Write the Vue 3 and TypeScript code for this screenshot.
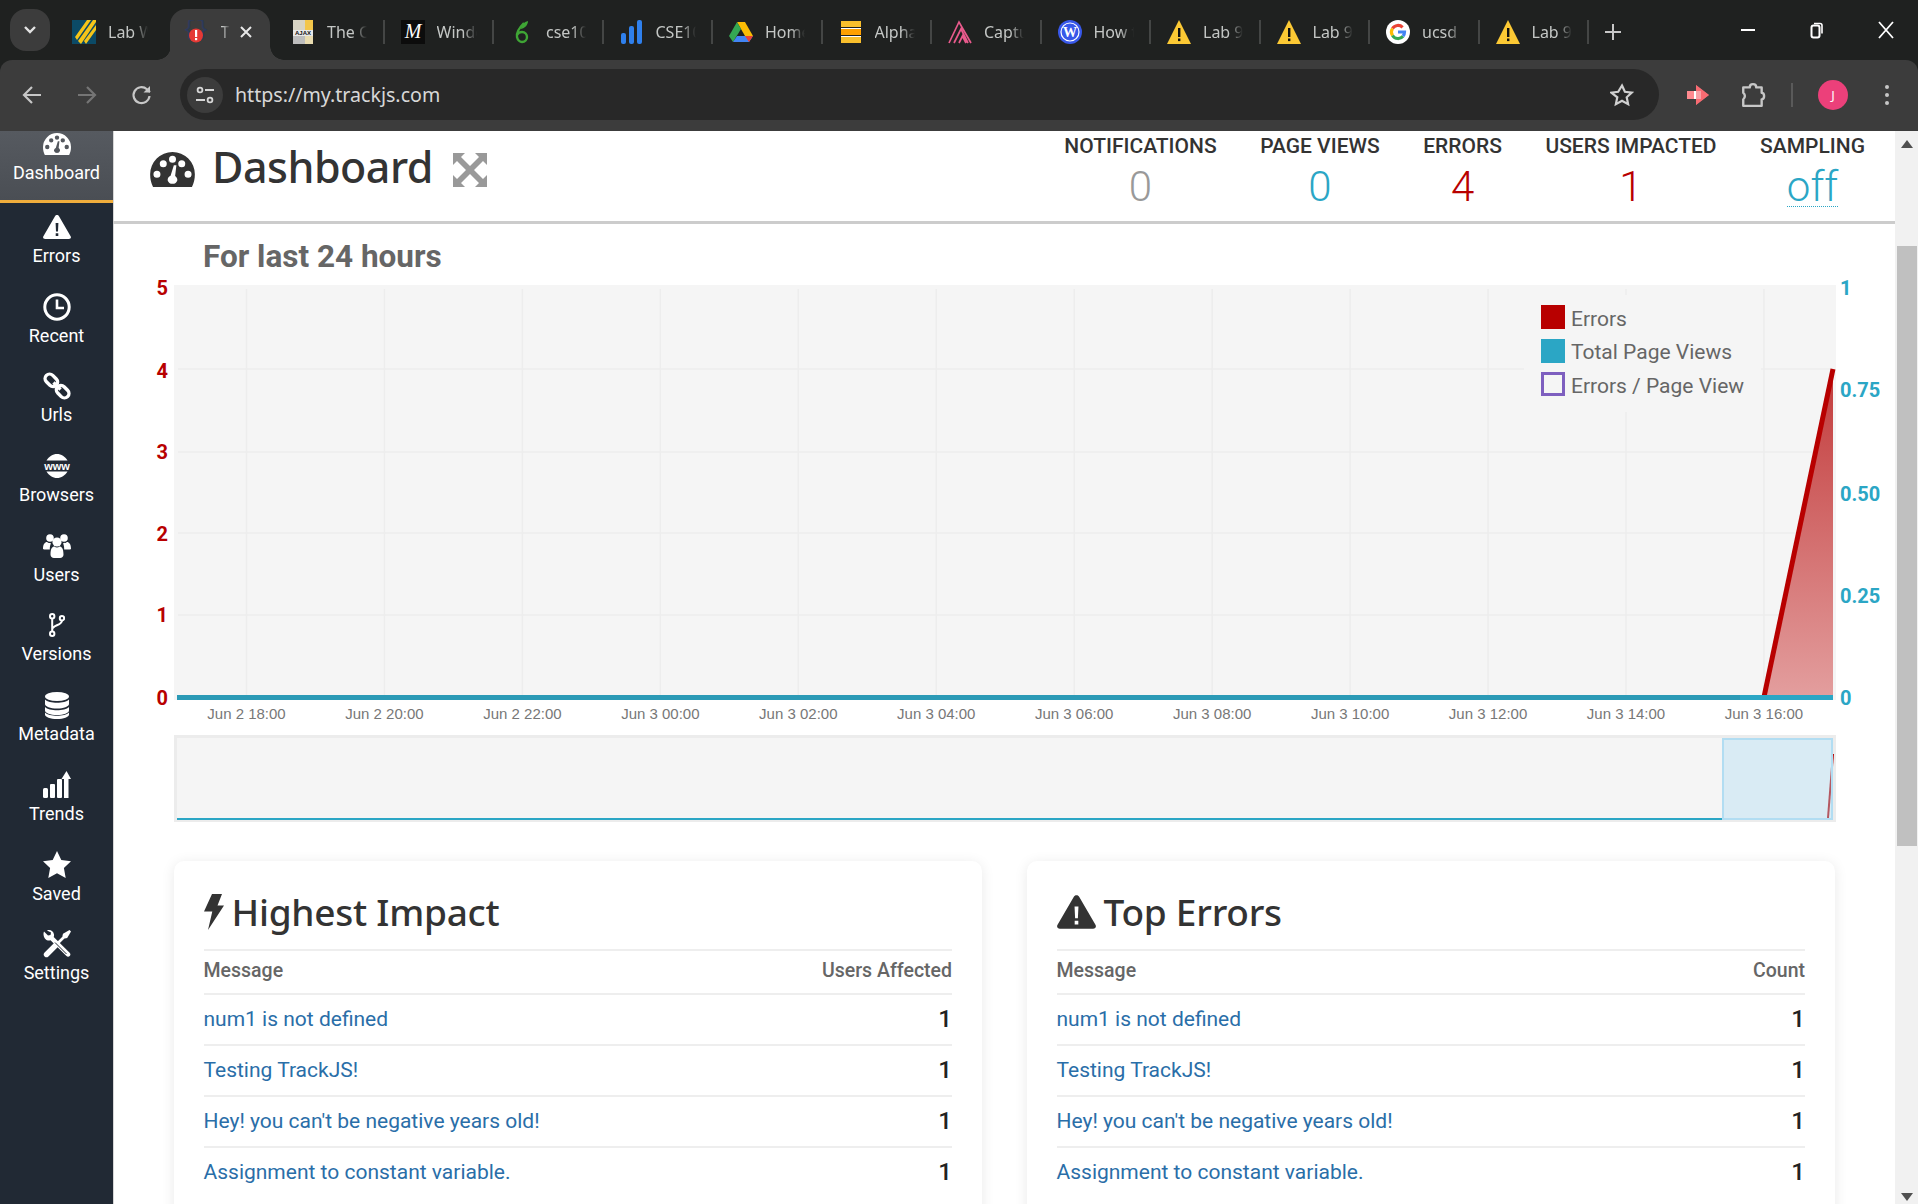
<template>
  <div class="page">
    <!-- shared icons -->
    <svg class="sprites" xmlns="http://www.w3.org/2000/svg">
      <symbol id="i-dash" viewBox="0 0 46 36">
        <path fill-rule="evenodd" :d="dashPath" />
      </symbol>
      <symbol id="i-warn" viewBox="0 0 28 24">
        <path fill-rule="evenodd" d="M14 0c.9 0 1.6.5 2 1.200l11.600 20c.9 1.500-.1 2.800-1.700 2.800H2.100C.5 24-.5 22.700.4 21.200L12 1.200C12.400.5 13.100 0 14 0zM12.600 8l.4 8.500h2l.4-8.500zM12.700 18.200v2.800h2.600v-2.800z" />
      </symbol>
      <symbol id="i-clock" viewBox="0 0 28 28">
        <circle cx="14" cy="14" r="12.200" fill="none" stroke="currentColor" stroke-width="3" />
        <path d="M14 6.500V15h7" fill="none" stroke="currentColor" stroke-width="2.600" />
      </symbol>
      <symbol id="i-link" viewBox="0 0 28 28">
        <g transform="rotate(45 14 14)" fill="none" stroke="currentColor" stroke-width="3.400">
          <rect x="-1" y="9.500" width="14" height="9" rx="4.500" />
          <rect x="15" y="9.500" width="14" height="9" rx="4.500" />
          <path d="M9 14h10" />
        </g>
      </symbol>
      <symbol id="i-www" viewBox="0 0 28 24">
        <path d="M3.500 6.500C6 2.500 9.700 0 14 0s8 2.500 10.500 6.500z" />
        <path d="M3.500 17.500C6 21.500 9.700 24 14 24s8-2.500 10.500-6.500z" />
        <text x="14" y="15.500" text-anchor="middle" class="www">www</text>
      </symbol>
      <symbol id="i-users" viewBox="0 0 28 24">
        <circle cx="7" cy="4" r="3.800" />
        <circle cx="21" cy="4" r="3.800" />
        <path d="M0 15c0-5 2-7 4-7 1 .8 2 1.200 4 1.200-.8 1.500-1.200 3.500-1.200 6.300H2c-1.200 0-2-.3-2-.5zM28 15c0-5-2-7-4-7-1 .8-2 1.200-4 1.200.8 1.500 1.200 3.500 1.200 6.300H26c1.200 0 2-.3 2-.5z" />
        <circle cx="14" cy="8" r="4.600" />
        <path d="M7.500 20.500c0-6 1.800-8 4-8 .7.500 1.500.9 2.500.9s1.800-.4 2.500-.9c2.200 0 4 2 4 8 0 2.300-1.500 3.500-3.500 3.500h-6c-2 0-3.500-1.200-3.500-3.500z" />
      </symbol>
      <symbol id="i-fork" viewBox="0 0 16 24">
        <g fill="none" stroke="currentColor" stroke-width="2">
          <circle cx="3.200" cy="3.200" r="2.200" />
          <circle cx="3.200" cy="20.800" r="2.200" />
          <circle cx="13" cy="5.200" r="2.200" />
          <path d="M3.200 5.500v13M13 7.500c0 5-9.800 4.500-9.800 9" />
        </g>
      </symbol>
      <symbol id="i-db" viewBox="0 0 24 27">
        <ellipse cx="12" cy="4.500" rx="12" ry="4.500" />
        <path d="M0 7.500c2 2.300 7 3.300 12 3.300s10-1 12-3.300v4.500c0 2.500-5.400 4.500-12 4.500S0 14.500 0 12z" />
        <path d="M0 15c2 2.300 7 3.300 12 3.300s10-1 12-3.300v3.500c0 2.500-5.400 4.500-12 4.500S0 21 0 18.500z" />
        <path d="M0 20.500c2 2.300 7 3.300 12 3.300s10-1 12-3.300v2c0 2.500-5.400 4.500-12 4.500S0 25 0 22.500z" />
      </symbol>
      <symbol id="i-trends" viewBox="0 0 28 27">
        <rect x="0" y="17" width="5" height="10" rx="1.500" />
        <rect x="7" y="13" width="5" height="14" rx="1" />
        <rect x="14" y="8" width="5" height="19" rx="1" />
        <path d="M21 27V8h-2.500L23.500 0 28 8h-2.500v19z" />
      </symbol>
      <symbol id="i-star" viewBox="0 0 28 27">
        <path d="M14 0l4.300 9 9.700 1.300-7.100 6.800 1.800 9.900L14 22.300 5.300 27l1.800-9.900L0 10.300 9.700 9z" />
      </symbol>
      <symbol id="i-tools" viewBox="0 0 28 28">
        <path fill="none" stroke="currentColor" stroke-width="5.400" stroke-linecap="round" d="M3.500 24.500l9.500-9.500" />
        <path fill="none" stroke="currentColor" stroke-width="2.600" d="M13 15l9-9" />
        <path d="M20 3.800L26.500 0 28 1.500 24.200 8l-2.500.6-2.300-2.300z" />
        <path d="M1 1.500L5 5.500l2.500-.5.500-2.500L4 .5C7-.8 10.500 1 11 4.500c.1 1 0 1.800-.3 2.500l15.700 15.600c1.300 1.300 1.300 2.500.3 3.500s-2.300.9-3.500-.3L7.500 10.200c-.9.300-1.700.4-2.500.3C1.500 10-.5 5 1 1.500z" />
        <path d="M12 12.500l11.500 11.500" stroke="#212934" stroke-width="1" />
      </symbol>
      <symbol id="i-bolt" viewBox="0 0 20 36">
        <path d="M8 0h10l-4.500 11.500H20L4 36l4.300-18.500H0z" />
      </symbol>
      <symbol id="i-expand" viewBox="0 0 34 34">
        <path d="M0 0h12L8 4l9 9 9-9-4-4h12v12l-4-4-9 9 9 9 4-4v12H22l4-4-9-9-9 9 4 4H0V22l4 4 9-9-9-9-4 4z" />
      </symbol>

      <!-- favicons -->
      <symbol id="f-lab" viewBox="0 0 24 24">
        <rect width="24" height="24" fill="#0b4a66" />
        <path fill="#f5c518" d="M3 17L15 0h4L5 20zM6 21L21 0h3v2L9 24zM12 21L24 5v5L14 24z" />
      </symbol>
      <symbol id="f-track" viewBox="0 0 24 24">
        <text x="12" y="15" text-anchor="middle" class="fav-brace">{}</text>
        <circle cx="12" cy="15.500" r="7" fill="#e53935" />
        <rect x="11" y="10" width="2.200" height="7" fill="#fff" />
        <rect x="11" y="18" width="2.200" height="2.200" fill="#fff" />
      </symbol>
      <symbol id="f-book" viewBox="0 0 24 24">
        <rect x="2" y="0" width="20" height="10" fill="#d8d4c4" />
        <rect x="14" y="0" width="8" height="10" fill="#f3c64a" />
        <rect x="2" y="10" width="20" height="6" fill="#e8e8e8" />
        <text x="12" y="15" text-anchor="middle" class="fav-ajax">AJAX</text>
        <rect x="2" y="16" width="20" height="8" fill="#bdbdbd" />
        <rect x="14" y="16" width="8" height="8" fill="#e9dcb0" />
      </symbol>
      <symbol id="f-wind" viewBox="0 0 24 24">
        <rect width="24" height="24" fill="#0c0c0c" />
        <text x="12" y="18" text-anchor="middle" class="fav-m">M</text>
      </symbol>
      <symbol id="f-sprout" viewBox="0 0 24 24">
        <path fill="none" stroke="#3fa535" stroke-width="2.400" d="M14 3C9 8 6 12 7 17c.6 3 3 5 5 5 3 0 5-2.500 5-5s-2-5-5-5c-2 0-4 1-5 3" />
        <path fill="#3fa535" d="M11 9c0-4 3-7 7-8 0 4-3 7-7 8z" />
      </symbol>
      <symbol id="f-bars" viewBox="0 0 24 24">
        <rect x="1" y="13" width="5" height="11" rx="2" fill="#2f80ed" />
        <rect x="9" y="6" width="5" height="18" rx="2" fill="#2f80ed" />
        <rect x="17" y="0" width="5" height="24" rx="2" fill="#2f80ed" />
      </symbol>
      <symbol id="f-drive" viewBox="0 0 24 24">
        <path fill="#fbbc04" d="M8 2h8l8 14h-8z" />
        <path fill="#34a853" d="M8 2l4 7-8 13-4-6z" />
        <path fill="#4285f4" d="M4 22l4-6h16l-4 6z" />
        <path fill="#ea4335" d="M16 16h8l-4 6z" />
      </symbol>
      <symbol id="f-alpha" viewBox="0 0 24 24">
        <rect x="2" y="1" width="20" height="6" fill="#f9bf2c" />
        <rect x="2" y="9" width="20" height="6" fill="#ffa000" />
        <rect x="2" y="17" width="20" height="6" fill="#f9bf2c" />
        <rect x="2" y="8" width="20" height="1" fill="#fff" />
        <rect x="2" y="16" width="20" height="1" fill="#fff" />
      </symbol>
      <symbol id="f-capt" viewBox="0 0 24 24">
        <path fill="none" stroke="#e85a8c" stroke-width="1.700" d="M1 23L11 2l12 21M6 23l7-14 7 14M11 23l3.500-7 3.500 7" />
      </symbol>
      <symbol id="f-wp" viewBox="0 0 24 24">
        <circle cx="12" cy="12" r="12" fill="#3858e9" />
        <circle cx="12" cy="12" r="9" fill="none" stroke="#fff" stroke-width="1.200" />
        <text x="12" y="17" text-anchor="middle" class="fav-w">W</text>
      </symbol>
      <symbol id="f-warn" viewBox="0 0 24 24">
        <path fill="#fcc934" d="M12 0l12 24H0z" />
        <rect x="11" y="8" width="2.400" height="9" fill="#111" />
        <rect x="11" y="18.500" width="2.400" height="2.600" fill="#111" />
      </symbol>
      <symbol id="f-google" viewBox="0 0 24 24">
        <circle cx="12" cy="12" r="12" fill="#fff" />
        <g fill="none" stroke-width="3.200">
          <path stroke="#ea4335" d="M6.500 8.500A6.500 6.500 0 0 1 16.600 7.400" />
          <path stroke="#fbbc04" d="M6.500 8.500a6.500 6.500 0 0 0 0 7" />
          <path stroke="#34a853" d="M6.500 15.500a6.500 6.500 0 0 0 10.500.7" />
          <path stroke="#4285f4" d="M17 16.200c1-1.100 1.500-2.500 1.500-4.200H12" />
        </g>
      </symbol>
    </svg>

    <!-- browser frame -->
    <div class="tabstrip">
      <button class="tabs-menu">
        <svg width="14" height="10" viewBox="0 0 14 10"><path d="M2 2l5 5 5-5" fill="none" stroke="#e3e3e3" stroke-width="2.400" /></svg>
      </button>
      <div
        v-for="(tab, i) in tabs"
        :key="i"
        class="tab"
        :class="{ active: tab.active }"
      >
        <svg class="favicon"><use :href="`#${tab.icon}`" /></svg>
        <span class="tab-label" :class="{ short: tab.active }">{{ tab.label }}</span>
        <svg v-if="tab.active" class="tab-close" viewBox="0 0 14 14"><path d="M2 2l10 10M12 2L2 12" stroke="#e8e8e8" stroke-width="2" /></svg>
      </div>
      <svg class="new-tab" viewBox="0 0 18 18"><path d="M9 1v16M1 9h16" stroke="#c7c7c7" stroke-width="2" /></svg>
      <div class="win-controls">
        <svg viewBox="0 0 18 18"><path d="M2 9h14" stroke="#fff" stroke-width="2" /></svg>
        <svg viewBox="0 0 18 18"><path d="M6 2.500h6a2 2 0 0 1 2 2v8" fill="none" stroke="#fff" stroke-width="1.600" /><rect x="3.500" y="4.500" width="8" height="12" rx="2" fill="none" stroke="#fff" stroke-width="2" /></svg>
        <svg viewBox="0 0 18 18"><path d="M2 1l14 16M16 1L2 17" stroke="#fff" stroke-width="1.800" /></svg>
      </div>
    </div>
    <div class="toolbar">
      <svg class="tool-icon" viewBox="0 0 24 24"><path d="M21 12H4M12 4l-8 8 8 8" fill="none" stroke="#c7c7c7" stroke-width="2.200" /></svg>
      <svg class="tool-icon" viewBox="0 0 24 24"><path d="M3 12h17M12 4l8 8-8 8" fill="none" stroke="#757575" stroke-width="2.200" /></svg>
      <svg class="tool-icon" viewBox="0 0 24 24"><path d="M19.500 13a8 8 0 1 1-2.600-6.800L20 9" fill="none" stroke="#c7c7c7" stroke-width="2.200" /><path d="M20 3v6.500h-6.500z" fill="#c7c7c7" /></svg>
      <div class="omnibox">
        <span class="site-info">
          <svg width="20" height="20" viewBox="0 0 20 20">
            <g fill="none" stroke="#d6d6d6" stroke-width="1.800">
              <circle cx="5" cy="5" r="2.400" /><path d="M10 5h9M1 15h9" /><circle cx="15" cy="15" r="2.400" />
            </g>
          </svg>
        </span>
        <span class="url">https://my.trackjs.com</span>
        <svg class="star" viewBox="0 0 24 24"><path d="M12 2.500l2.900 6.300 6.900.8-5.100 4.700 1.400 6.800-6.100-3.400-6.100 3.400 1.400-6.800L1.200 9.600l7-.8z" fill="none" stroke="#d0d0d0" stroke-width="2.200" /></svg>
      </div>
      <svg class="ext-red" viewBox="0 0 24 24"><path d="M1 8h9V2l13 10-13 10v-6H1z" fill="#ff8a8f" /><path d="M8 8h7v8H8z" fill="#fff" /><path d="M10 2l13 10-13 10z" fill="#f4525b" opacity=".55" /></svg>
      <svg class="ext-puzzle" viewBox="0 0 24 24"><path d="M3 5h6c0-4 6-4 6 0h5v5c3 0 3 6 0 6v6H3v-6c2-1.500 2-4.500 0-6z" fill="none" stroke="#c7c7c7" stroke-width="2.200" stroke-linejoin="round" /></svg>
      <span class="tool-sep"></span>
      <span class="avatar">J</span>
      <span class="kebab"><i></i><i></i><i></i></span>
    </div>

    <div class="viewport">
      <nav class="sidebar">
        <a v-for="item in nav" :key="item.label" class="nav-item" :class="{ active: item.active }">
          <span class="nav-icon">
            <svg :style="{ width: item.w + 'px', height: item.h + 'px' }"><use :href="`#${item.icon}`" /></svg>
          </span>
          <span class="nav-label">{{ item.label }}</span>
        </a>
      </nav>

      <main class="main">
        <header class="page-head">
          <svg class="head-icon"><use href="#i-dash" /></svg>
          <h1>Dashboard</h1>
          <svg class="head-expand"><use href="#i-expand" /></svg>
          <div class="stats">
            <div v-for="s in stats" :key="s.label" class="stat">
              <div class="stat-label">{{ s.label }}</div>
              <div class="stat-value" :class="s.tone"><span>{{ s.value }}</span></div>
            </div>
          </div>
        </header>

        <section class="content">
          <h2 class="range">For last 24 hours</h2>

          <div class="chart">
            <svg class="chart-svg" width="1662" height="450">
              <defs>
                <linearGradient id="errFill" x1="0" y1="0" x2="0" y2="1">
                  <stop offset="0" stop-color="#c23b3b" />
                  <stop offset="1" stop-color="#e39e9e" />
                </linearGradient>
              </defs>
              <rect width="1662" height="415" fill="#f5f5f5" />
              <path v-for="x in gridX" :key="x" :d="`M${x} 4V410`" stroke="#ededed" stroke-width="1.500" />
              <path v-for="y in gridY" :key="y" :d="`M4 ${y}H1659`" stroke="#ededed" stroke-width="1.500" />
              <path d="M1590 412L1659 84V412z" fill="url(#errFill)" />
              <path d="M1590 412L1659 84" stroke="#b80000" stroke-width="5" fill="none" />
              <path d="M3 412.500H1659" stroke="#2ba6c5" stroke-width="5" />
              <path d="M3 412.500H1566" stroke="#2b9ab6" stroke-width="5" />
              <text v-for="t in leftAxis" :key="t.label" x="-6" :y="t.y" text-anchor="end" class="axis-left">{{ t.label }}</text>
              <text v-for="t in rightAxis" :key="t.label" x="1666" :y="t.y" class="axis-right">{{ t.label }}</text>
              <text v-for="t in xLabels" :key="t.label" :x="t.x" y="434" text-anchor="middle" class="axis-x">{{ t.label }}</text>
            </svg>
            <ul class="legend">
              <li v-for="l in legend" :key="l.label">
                <span class="swatch" :class="l.cls"></span><span class="legend-text">{{ l.label }}</span>
              </li>
            </ul>
          </div>

          <svg class="overview" width="1662" height="87">
            <rect x="1.500" y="1.500" width="1659" height="84" fill="#f5f5f5" stroke="#ececec" stroke-width="3" />
            <path d="M3 84H1659" stroke="#2ba6c5" stroke-width="2" />
            <path d="M1654 83L1659 19" stroke="#b80000" stroke-width="2" />
            <rect x="1549" y="4" width="109" height="80" fill="rgba(176,221,242,0.4)" stroke="#b2ddf2" stroke-width="2" />
          </svg>

          <div class="cards">
            <article v-for="card in cards" :key="card.title" class="card">
              <h3>
                <svg :class="card.iconClass"><use :href="`#${card.icon}`" /></svg>
                {{ card.title }}
              </h3>
              <table>
                <thead>
                  <tr><th>Message</th><th class="right">{{ card.column }}</th></tr>
                </thead>
                <tbody>
                  <tr v-for="row in rows" :key="row">
                    <td><a>{{ row }}</a></td>
                    <td class="right count">1</td>
                  </tr>
                </tbody>
              </table>
            </article>
          </div>
        </section>
      </main>

      <div class="scrollbar">
        <svg width="12" height="8" viewBox="0 0 12 8"><path d="M6 0l6 8H0z" fill="#505050" /></svg>
        <div class="thumb"></div>
        <svg class="down" width="12" height="8" viewBox="0 0 12 8"><path d="M0 0h12L6 8z" fill="#505050" /></svg>
      </div>
    </div>
  </div>
</template>

<script setup lang="ts">
type Tab = { icon: string; label: string; active?: boolean }
type NavItem = { icon: string; label: string; w: number; h: number; active?: boolean }

const circle = (x: number, y: number, r: number) =>
  `M${x - r} ${y}a${r} ${r} 0 1 0 ${r * 2} 0a${r} ${r} 0 1 0 ${-r * 2} 0z`

// dome with the dial dots and needle knocked out
const dashPath = [
  'M3 36C1 32 0 28 0 23A23 23 0 0 1 46 23C46 28 45 32 43 36z',
  circle(7, 23, 3.6),
  circle(13.5, 12, 3.6),
  circle(23, 7.5, 3.6),
  circle(32.5, 12, 3.6),
  circle(39, 23, 3.6),
  'M18 29a5.200 5.200 0 0 0 10 0c0-2-1-3.500-2.300-4.300L27 13.500h-2.600L21 24.500C19 25.500 18 27 18 29z'
].join('')

const tabs: Tab[] = [
  { icon: 'f-lab', label: 'Lab Week' },
  { icon: 'f-track', label: 'TrackJS', active: true },
  { icon: 'f-book', label: 'The Cut' },
  { icon: 'f-wind', label: 'Window' },
  { icon: 'f-sprout', label: 'cse100' },
  { icon: 'f-bars', label: 'CSE100' },
  { icon: 'f-drive', label: 'Home' },
  { icon: 'f-alpha', label: 'Alphabet' },
  { icon: 'f-capt', label: 'Capture' },
  { icon: 'f-wp', label: 'How to' },
  { icon: 'f-warn', label: 'Lab 9' },
  { icon: 'f-warn', label: 'Lab 9' },
  { icon: 'f-google', label: 'ucsd lab' },
  { icon: 'f-warn', label: 'Lab 9' }
]

const nav: NavItem[] = [
  { icon: 'i-dash', label: 'Dashboard', w: 28, h: 22, active: true },
  { icon: 'i-warn', label: 'Errors', w: 28, h: 24 },
  { icon: 'i-clock', label: 'Recent', w: 28, h: 28 },
  { icon: 'i-link', label: 'Urls', w: 28, h: 28 },
  { icon: 'i-www', label: 'Browsers', w: 28, h: 24 },
  { icon: 'i-users', label: 'Users', w: 28, h: 24 },
  { icon: 'i-fork', label: 'Versions', w: 16, h: 24 },
  { icon: 'i-db', label: 'Metadata', w: 24, h: 27 },
  { icon: 'i-trends', label: 'Trends', w: 28, h: 27 },
  { icon: 'i-star', label: 'Saved', w: 28, h: 27 },
  { icon: 'i-tools', label: 'Settings', w: 28, h: 28 }
]

const stats = [
  { label: 'NOTIFICATIONS', value: '0', tone: 'grey' },
  { label: 'PAGE VIEWS', value: '0', tone: 'blue' },
  { label: 'ERRORS', value: '4', tone: 'red' },
  { label: 'USERS IMPACTED', value: '1', tone: 'red' },
  { label: 'SAMPLING', value: 'off', tone: 'blue link' }
]

const gridX = Array.from({ length: 12 }, (_, i) => 72.5 + i * 137.95)
const gridY = [84, 167, 248, 330]

const leftAxis = [
  { label: '5', y: 10 },
  { label: '4', y: 93 },
  { label: '3', y: 174 },
  { label: '2', y: 256 },
  { label: '1', y: 337 },
  { label: '0', y: 420 }
]
const rightAxis = [
  { label: '1', y: 10 },
  { label: '0.75', y: 112 },
  { label: '0.50', y: 216 },
  { label: '0.25', y: 318 },
  { label: '0', y: 420 }
]

const times = ['Jun 2 18:00', 'Jun 2 20:00', 'Jun 2 22:00', 'Jun 3 00:00', 'Jun 3 02:00', 'Jun 3 04:00', 'Jun 3 06:00', 'Jun 3 08:00', 'Jun 3 10:00', 'Jun 3 12:00', 'Jun 3 14:00', 'Jun 3 16:00']
const xLabels = times.map((label, i) => ({ label, x: gridX[i] }))

const legend = [
  { label: 'Errors', cls: 'err' },
  { label: 'Total Page Views', cls: 'views' },
  { label: 'Errors / Page View', cls: 'ratio' }
]

const cards = [
  { title: 'Highest Impact', column: 'Users Affected', icon: 'i-bolt', iconClass: 'bolt' },
  { title: 'Top Errors', column: 'Count', icon: 'i-warn', iconClass: 'warn' }
]

const rows = [
  'num1 is not defined',
  'Testing TrackJS!',
  "Hey! you can't be negative years old!",
  'Assignment to constant variable.'
]
</script>

<style>
html,
body {
  margin: 0;
  overflow: hidden;
  background: #fff;
}
</style>

<style scoped>
.page {
  width: 1918px;
  height: 1204px;
  overflow: hidden;
  display: flex;
  flex-direction: column;
  background: #1f2120;
  font-family: Roboto, "Liberation Sans", sans-serif;
}

.sprites {
  display: none;
}

.www {
  font: bold 11px "Liberation Sans", sans-serif;
  fill: currentColor;
}
.fav-brace {
  font: 22px "Liberation Mono", monospace;
  fill: #2c3a5c;
}
.fav-ajax {
  font: bold 6px "Liberation Sans", sans-serif;
  fill: #111;
}
.fav-m {
  font: italic 20px "Liberation Serif", serif;
  fill: #fff;
}
.fav-w {
  font: bold 14px "Liberation Serif", serif;
  fill: #fff;
}

/* browser frame */
.tabstrip {
  height: 60px;
  flex: none;
  display: flex;
  align-items: flex-start;
  box-sizing: border-box;
  padding-top: 9px;
  padding-left: 10px;
}

.tabs-menu {
  width: 40px;
  height: 42px;
  margin-right: 6px;
  border: none;
  border-radius: 16px;
  background: #3c3c3c;
  display: flex;
  align-items: center;
  justify-content: center;
  padding: 0;
}

.tab {
  position: relative;
  flex: none;
  width: 109.500px;
  height: 51px;
  box-sizing: border-box;
  padding: 0 0 5px 16px;
  display: flex;
  align-items: center;
}

.tab::after {
  content: "";
  position: absolute;
  right: 0;
  top: 11px;
  width: 2px;
  height: 24px;
  background: #444645;
}

.tab:nth-child(2)::after {
  display: none;
}

.tab.active {
  padding-left: 18px;
}

.tab.active::before {
  content: "";
  position: absolute;
  inset: 0 4.600px;
  background: #3c3c3c;
  border-radius: 16px 16px 0 0;
}

.tab.active::after {
  left: -9px;
  right: -9px;
  top: auto;
  bottom: 0;
  width: auto;
  height: 14px;
  background:
    radial-gradient(circle at 0 0, transparent 13.500px, #3c3c3c 14px) left bottom / 14px 14px no-repeat,
    radial-gradient(circle at 100% 0, transparent 13.500px, #3c3c3c 14px) right bottom / 14px 14px no-repeat;
}

.favicon {
  position: relative;
  flex: none;
  width: 24px;
  height: 24px;
}

.tab-label {
  position: relative;
  width: 40px;
  margin-left: 12px;
  overflow: hidden;
  white-space: nowrap;
  font: 16px "Noto Sans", sans-serif;
  color: #c4c7c5;
  -webkit-mask-image: linear-gradient(90deg, #000 65%, transparent 100%);
  mask-image: linear-gradient(90deg, #000 65%, transparent 100%);
}

.tab-label.short {
  width: 9px;
  margin-left: 13px;
  -webkit-mask-image: linear-gradient(90deg, #000 20%, transparent 100%);
  mask-image: linear-gradient(90deg, #000 20%, transparent 100%);
}

.tab-close {
  position: relative;
  width: 14px;
  height: 14px;
  margin-left: 9px;
}

.new-tab {
  width: 18px;
  height: 18px;
  margin: 14px 0 0 15px;
}

.win-controls {
  margin-left: auto;
  padding: 12px 23px 0 0;
  display: flex;
  gap: 51px;
}

.win-controls svg {
  width: 18px;
  height: 18px;
}

.toolbar {
  height: 71px;
  flex: none;
  box-sizing: border-box;
  padding: 9px 21px 11px 20px;
  display: flex;
  align-items: center;
  gap: 31px;
  background: #3c3c3c;
  border-radius: 12px 12px 0 0;
}

.tool-icon {
  width: 24px;
  height: 24px;
  flex: none;
}

.omnibox {
  flex: 1;
  height: 51px;
  margin-left: -5px;
  box-sizing: border-box;
  padding: 0 25px 0 7px;
  display: flex;
  align-items: center;
  background: #282828;
  border-radius: 26px;
}

.site-info {
  width: 36px;
  height: 36px;
  border-radius: 50%;
  background: #3c3c3c;
  display: flex;
  align-items: center;
  justify-content: center;
}

.url {
  margin-left: 12px;
  font: 19.600px "Noto Sans", sans-serif;
  color: #d8d8d8;
}

.star {
  width: 24px;
  height: 24px;
  margin-left: auto;
}

.ext-red {
  width: 24px;
  height: 24px;
  margin: 0 -1px 0 -4px;
}

.ext-puzzle {
  width: 26px;
  height: 26px;
}

.tool-sep {
  width: 2px;
  height: 24px;
  background: #5a5a5a;
  margin: 0 -6px 0 -6px;
}

.avatar {
  width: 30px;
  height: 30px;
  border-radius: 50%;
  background: #ec407a;
  color: #fff;
  font: 13px "Noto Sans", sans-serif;
  display: flex;
  align-items: center;
  justify-content: center;
}

.kebab {
  width: 20px;
  display: flex;
  flex-direction: column;
  align-items: center;
  gap: 4px;
  margin-left: -2px;
}

.kebab i {
  width: 4px;
  height: 4px;
  border-radius: 50%;
  background: #c7c7c7;
}

.viewport {
  flex: 1;
  min-height: 0;
  display: flex;
  background: #fff;
  color: #333;
}

/* left nav */
.sidebar {
  width: 113px;
  flex: none;
  background: #212934;
  border-right: 1px solid #d6d6d6;
  box-sizing: content-box;
  margin-right: -1px;
  overflow: hidden;
}

.nav-item {
  display: flex;
  flex-direction: column;
  align-items: center;
  height: 79.700px;
  box-sizing: border-box;
  padding-top: 10px;
  color: #fff;
}

.nav-item.active {
  height: 72px;
  padding-top: 0;
  background: linear-gradient(#565a60, #4a4e54);
  border-bottom: 3px solid #f0ad3c;
}

.nav-icon {
  height: 28px;
  display: flex;
  align-items: center;
  justify-content: center;
}

.nav-item.active .nav-icon {
  margin-top: -1px;
}

.nav-icon svg {
  fill: currentColor;
  color: #fff;
  display: block;
}

.nav-label {
  margin-top: 4px;
  font-size: 18px;
  line-height: 22px;
}

/* page */
.main {
  flex: 1;
  min-width: 0;
  overflow: hidden;
}

.page-head {
  height: 93px;
  box-sizing: border-box;
  border-bottom: 3px solid #ccc;
  padding: 0 30px 0 37px;
  display: flex;
  align-items: flex-start;
}

.head-icon {
  width: 45px;
  height: 35px;
  margin-top: 21px;
  fill: #333;
  flex: none;
}

.page-head h1 {
  margin: 7px 0 0 17px;
  font: 500 43px/58px "Noto Sans", sans-serif;
  letter-spacing: -0.5px;
  color: #333;
}

.head-expand {
  width: 34px;
  height: 34px;
  margin: 22px 0 0 20px;
  fill: #999;
  flex: none;
}

.stats {
  margin-left: auto;
  display: flex;
  gap: 43.500px;
  padding-top: 3px;
}

.stat {
  text-align: center;
}

.stat-label {
  font-size: 21px;
  font-weight: 500;
  line-height: 24px;
  color: #333;
  margin-bottom: 9px;
}

.stat-value {
  font-size: 42px;
  font-weight: 300;
  line-height: 40px;
}

.stat-value span {
  display: inline-block;
}

.grey {
  color: #999;
}

.blue {
  color: #2ba6c5;
}

.red {
  color: #b80000;
}

.link span {
  border-bottom: 1px dotted #2ba6c5;
  height: 39px;
}

.content {
  padding: 0 59px 0 61px;
}

.range {
  margin: 0;
  padding: 14px 0 9px 29px;
  font-size: 31.500px;
  font-weight: 700;
  line-height: 38px;
  color: #666;
}

.chart {
  position: relative;
  height: 450px;
}

.chart-svg {
  display: block;
  overflow: visible;
}

.axis-left,
.axis-right {
  font: bold 20px Roboto, sans-serif;
}

.axis-left {
  fill: #b80000;
}

.axis-right {
  fill: #2ba6c5;
}

.axis-x {
  font: 15px "Liberation Sans", sans-serif;
  fill: #777;
}

.legend {
  position: absolute;
  left: 1350px;
  top: 10px;
  width: 237px;
  height: 117px;
  box-sizing: border-box;
  margin: 0;
  padding: 10px 0 0 17px;
  list-style: none;
  background: #f5f5f5;
  font-size: 21px;
  color: #666;
}

.legend li {
  display: flex;
  align-items: center;
  height: 24px;
  margin-bottom: 9.500px;
}

.legend-text {
  padding-top: 3px;
}

.swatch {
  width: 24px;
  height: 24px;
  box-sizing: border-box;
  margin-right: 6px;
}

.swatch.err {
  background: #b80000;
}

.swatch.views {
  background: #2ba6c5;
}

.swatch.ratio {
  border: 3px solid #7e5fbf;
}

.overview {
  display: block;
}

.cards {
  margin-top: 39px;
  display: grid;
  grid-template-columns: 808px 808px;
  gap: 45px;
}

.card {
  background: #fff;
  border-radius: 10px;
  box-shadow: 0 2px 14px rgba(0, 0, 0, 0.09);
  padding: 30px 30px 30px 29.500px;
}

.card h3 {
  margin: 0;
  height: 58px;
  box-sizing: border-box;
  padding-bottom: 16px;
  display: flex;
  align-items: center;
  font: 500 37px/42px "Noto Sans", sans-serif;
  letter-spacing: -0.25px;
  color: #333;
}

.bolt {
  width: 20px;
  height: 36px;
  margin-right: 8px;
  fill: #333;
}

.warn {
  width: 39px;
  height: 36px;
  margin-right: 8px;
  fill: #333;
}

table {
  width: 100%;
  border-collapse: collapse;
}

th {
  height: 38px;
  padding: 0 0 4px;
  text-align: left;
  border-top: 2px solid #eee;
  font-size: 19.500px;
  font-weight: 500;
  color: #666;
}

td {
  height: 47px;
  padding: 0 0 2px;
  border-top: 2px solid #eee;
  font-size: 21px;
  color: #2a6ea8;
}

.right {
  text-align: right;
}

.count {
  font-size: 24px;
  font-weight: 500;
  color: #222;
  padding-right: 0;
}

/* page scrollbar */
.scrollbar {
  width: 23px;
  flex: none;
  position: relative;
  background: #f1f1f1;
  display: flex;
  flex-direction: column;
  align-items: center;
  padding-top: 9px;
  box-sizing: border-box;
}

.thumb {
  width: 20px;
  height: 600px;
  margin-top: 98px;
  background: #c0c0c0;
}

.down {
  margin-top: auto;
  margin-bottom: 3px;
}
</style>
